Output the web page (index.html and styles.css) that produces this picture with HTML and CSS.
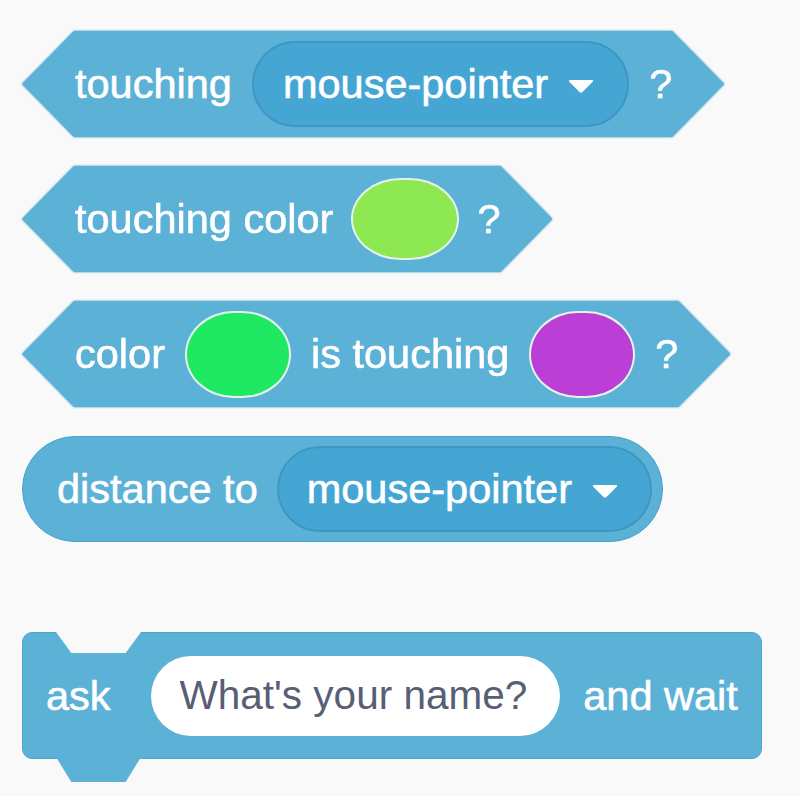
FILE: index.html
```html
<!DOCTYPE html>
<html>
<head lang="en">
    <meta charset="UTF-8">
    <title>sensing</title>
    <link rel="stylesheet" href="styles.css">
</head>
<body>
<div class="palette">
    <div class="edge">
        <div class="hex hex-one">
            <span class="label">touching</span>
            <div class="menu">
                <span>mouse-pointer</span>
                <svg class="arrow" width="28" height="16" viewBox="0 0 28 16"><path d="M3 2 L25 2 Q27 2 25.5 4 L15.5 14 Q14 15.5 12.5 14 L2.5 4 Q1 2 3 2 Z" fill="#fff"/></svg>
            </div>
            <span class="label">?</span>
        </div>
    </div>
    <div class="edge">
        <div class="hex hex-two">
            <span class="label">touching color</span>
            <i class="swatch lime"></i>
            <span class="label">?</span>
        </div>
    </div>
    <div class="edge">
        <div class="hex hex-three">
            <span class="label">color</span>
            <i class="swatch green"></i>
            <span class="label">is touching</span>
            <i class="swatch purple"></i>
            <span class="label">?</span>
        </div>
    </div>
    <div class="round">
        <span class="label">distance to</span>
        <div class="menu">
            <span>mouse-pointer</span>
            <svg class="arrow" width="28" height="16" viewBox="0 0 28 16"><path d="M3 2 L25 2 Q27 2 25.5 4 L15.5 14 Q14 15.5 12.5 14 L2.5 4 Q1 2 3 2 Z" fill="#fff"/></svg>
        </div>
    </div>
    <div class="command">
        <div class="stack">
            <span class="label ask">ask</span>
            <div class="field">What's your name?</div>
            <span class="label">and wait</span>
        </div>
        <div class="tab"></div>
    </div>
</div>
</body>
</html>
```

FILE: styles.css
```css
*{
    margin: 0;
    padding: 0;
}
body{
    background-color: #f9f9f9;
    font-family: "Liberation Sans", Arial, sans-serif;
}
.palette{
    display: flex;
    flex-direction: column;
    align-items: flex-start;
    gap: 29px;
    padding: 31px 0 0 22px;
}
.label{
    color: #fff;
    font-size: 41.5px;
    line-height: 1;
    white-space: nowrap;
    -webkit-text-stroke: 0.6px #fff;
}
/* hexagon blocks */
.edge{
    filter: drop-shadow(0 0 1px #3f96c2);
}
.hex{
    height: 106px;
    display: flex;
    align-items: center;
    gap: 20px;
    padding: 0 52px 0 53px;
    background-color: #5cb1d6;
    clip-path: polygon(52px 0, calc(100% - 52px) 0, 100% 50%, calc(100% - 52px) 100%, 52px 100%, 0 50%);
}
.hex-two{
    gap: 18px;
}
.menu{
    height: 86px;
    box-sizing: border-box;
    display: flex;
    align-items: center;
    gap: 19px;
    padding: 0 32px 0 29px;
    border: 2px solid #3d96c3;
    border-radius: 43px;
    background-color: #46a6d3;
    color: #fff;
    font-size: 41.5px;
    white-space: nowrap;
    -webkit-text-stroke: 0.6px #fff;
}
.arrow{
    margin-top: 4px;
}
.swatch{
    display: block;
    box-sizing: border-box;
    border: 2px solid #e6f3ea;
    border-radius: 46% / 50%;
}
.lime{
    width: 108px;
    height: 82px;
    background-color: #8de852;
}
.green{
    width: 106px;
    height: 87px;
    background-color: #1fe863;
}
.purple{
    width: 106px;
    height: 87px;
    background-color: #bb3fd6;
}
/* reporter */
.round{
    height: 106px;
    box-sizing: border-box;
    display: flex;
    align-items: center;
    gap: 19px;
    padding: 0 10px 0 34px;
    background-color: #5cb1d6;
    border: 1px solid #48a2cf;
    border-radius: 53px;
}
.round .menu{
    padding: 0 31px 0 28px;
}
/* stack block */
.command{
    margin-top: 61px;
    display: flex;
    flex-direction: column;
}
.stack{
    position: relative;
    width: 740px;
    height: 127px;
    box-sizing: border-box;
    display: flex;
    align-items: center;
    gap: 23px;
    padding: 0 0 0 23px;
    background-color: #5cb1d6;
    border: 1px solid #4ba6d0;
    border-radius: 10px;
}
.stack .ask{
    margin-right: 17px;
}
.stack::before,
.tab{
    width: 85px;
    clip-path: polygon(0 0, 100% 0, 82% 100%, 18% 100%);
}
.stack::before{
    content: "";
    position: absolute;
    left: 33px;
    top: -1px;
    height: 21px;
    background-color: #f9f9f9;
}
.tab{
    margin: -2px 0 0 34px;
    height: 25px;
    background-color: #5cb1d6;
}
.field{
    height: 80px;
    display: flex;
    align-items: center;
    padding: 0 33px 0 29px;
    border-radius: 40px;
    background-color: #fff;
    color: #575e75;
    font-size: 40.5px;
    white-space: nowrap;
}
```
